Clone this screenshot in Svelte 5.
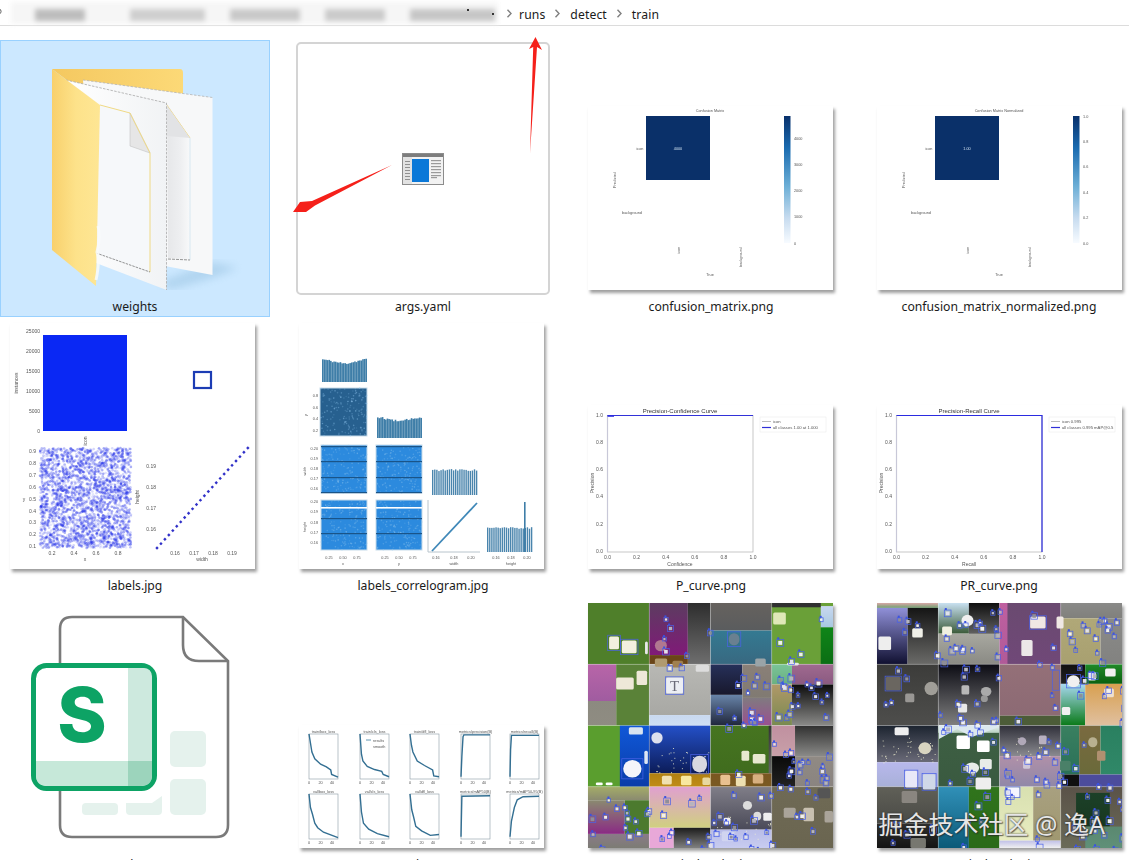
<script>
  function rng(seed) {
    let s = seed;
    return () => {
      s = (s + 0x6d2b79f5) | 0;
      let t = Math.imul(s ^ (s >>> 15), 1 | s);
      t = (t + Math.imul(t ^ (t >>> 7), 61 | t)) ^ t;
      return ((t ^ (t >>> 14)) >>> 0) / 4294967296;
    };
  }

  const files = [
    { name: 'weights', kind: 'folder', selected: true },
    { name: 'args.yaml', kind: 'yaml' },
    { name: 'confusion_matrix.png', kind: 'cm', title: 'Confusion Matrix', cell: '4000', ticks: ['0', '1000', '2000', '3000', '4000'] },
    { name: 'confusion_matrix_normalized.png', kind: 'cm', title: 'Confusion Matrix Normalized', cell: '1.00', ticks: ['0.0', '0.2', '0.4', '0.6', '0.8', '1.0'] },
    { name: 'labels.jpg', kind: 'labels' },
    { name: 'labels_correlogram.jpg', kind: 'correlogram' },
    { name: 'P_curve.png', kind: 'curve', title: 'Precision-Confidence Curve', xlabel: 'Confidence', l1: 'icon', l2: 'all classes 1.00 at 1.000', pr: false },
    { name: 'PR_curve.png', kind: 'curve', title: 'Precision-Recall Curve', xlabel: 'Recall', l1: 'icon 0.995', l2: 'all classes 0.995 mAP@0.5', pr: true },
    { name: 'results.csv', kind: 'sheet' },
    { name: 'results.png', kind: 'results' },
    { name: 'train_batch0.jpg', kind: 'mosaic', m: 0 },
    { name: 'train_batch1.jpg', kind: 'mosaic', m: 1, mark: true }
  ];

  const decimals = ['0.0', '0.2', '0.4', '0.6', '0.8', '1.0'];

  const r1 = rng(77);
  const labelDots = Array.from({ length: 2600 }, () => ({
    x: 30 + r1() * 91,
    y: 125 + r1() * 100,
    o: 0.1 + r1() * 0.3
  }));
  const diagDots = Array.from({ length: 24 }, (_, i) => ({ x: 147 + i * 3.95, y: 225 - i * 4.35 }));

  const corrPanels = [
    { x: 21, y: 65, w: 47, h: 48, fill: '#27608f', lines: [] },
    { x: 22, y: 122, w: 46, h: 48, fill: '#2c8ade', lines: [1, 16, 32, 47] },
    { x: 77, y: 122, w: 46, h: 48, fill: '#2c8ade', lines: [1, 16, 32, 47] },
    { x: 22, y: 177, w: 46, h: 50, fill: '#2c8ade', lines: [18, 33], gap: 7 },
    { x: 77, y: 177, w: 46, h: 50, fill: '#2c8ade', lines: [18, 33], gap: 7 }
  ];
  const r2 = rng(991);
  const corrDots = corrPanels.map((p) =>
    Array.from({ length: 170 }, () => ({ x: p.x + r2() * p.w, y: p.y + r2() * p.h, o: 0.15 + r2() * 0.35 }))
  );
  function hist(x, y, w, h, n, seed, edge = 0.1) {
    const r = rng(seed);
    const bw = w / n;
    return Array.from({ length: n }, (_, i) => {
      const c = Math.abs(i / (n - 1) - 0.5) * 2;
      const hh = h * (0.78 + edge * c + r() * 0.1);
      return { x: x + i * bw, y: y + h - hh, w: bw, h: hh };
    });
  }
  const hists = [
    ...hist(23, 37, 45, 22, 28, 11, 0.2),
    ...hist(78, 95, 45, 20, 28, 12, 0.22)
  ];
  const r3 = rng(33);
  const combs = [
    { x: 133, y: 146, w: 46, h: 26, n: 22 },
    { x: 188, y: 204, w: 46, h: 25, n: 22 }
  ].flatMap((c) =>
    Array.from({ length: c.n }, (_, i) => {
      const hh = c.h * (0.92 + r3() * 0.08);
      return { x: c.x + (i * c.w) / c.n, y: c.y + c.h - hh, w: c.w / c.n - 0.7, h: hh };
    })
  );

  const panels = [
    { t: 'train/box_loss', x: 10, y: 9, p: [[0,0],[.05,.2],[.1,.4],[.2,.55],[.4,.67],[.6,.73],[.75,.8],[.78,.9],[1,.96]] },
    { t: 'train/cls_loss', x: 61, y: 9, p: [[0,0],[.05,.45],[.1,.6],[.25,.72],[.5,.79],[.75,.83],[.8,.9],[1,.95]], legend: true },
    { t: 'train/dfl_loss', x: 111, y: 9, p: [[0,0],[.05,.25],[.1,.4],[.25,.6],[.5,.7],[.78,.8],[.82,.93],[1,.95]] },
    { t: 'metrics/precision(B)', x: 162, y: 9, p: [[0,.95],[.03,.5],[.07,.06],[.1,.02],[1,.02]] },
    { t: 'metrics/recall(B)', x: 211, y: 9, p: [[0,.95],[.02,.35],[.05,.03],[1,.03]] },
    { t: 'val/box_loss', x: 10, y: 69, p: [[0,0],[.05,.3],[.12,.45],[.2,.65],[.3,.75],[.5,.85],[1,.97]] },
    { t: 'val/cls_loss', x: 61, y: 69, p: [[0,0],[.05,.4],[.12,.65],[.3,.78],[.6,.88],[1,.95]] },
    { t: 'val/dfl_loss', x: 111, y: 69, p: [[0,0],[.06,.35],[.12,.5],[.2,.72],[.4,.82],[.7,.92],[1,.9]] },
    { t: 'metrics/mAP50(B)', x: 162, y: 69, p: [[0,.95],[.03,.05],[1,.04]] },
    { t: 'metrics/mAP50-95(B)', x: 211, y: 69, p: [[0,.95],[.05,.6],[.15,.3],[.25,.13],[.45,.06],[1,.05]] }
  ];
  const PW = 29;
  const PH = 45;
  const pathOf = (p) => p.map(([x, y]) => `${x * PW},${y * PH}`).join(' ');

  const T = 61.25;
  const area = (c, r, a, b, fx = 0, fy = 0, fw = 1, fh = 1) => ({
    x: (c + fx) * T, y: (r + fy) * T, w: fw * T, h: fh * T, a, b
  });
  const mosaicAreas = [
    [
      area(0,0,'#4f7f2a'),
      area(1,0,'#5c3c60','#801a78',0,0,.63,.85), area(1,0,'#2e2e2e','#6e6e6e',.63,0,.37,1), area(1,0,'#6a4518','#6a4518',0,.85,.63,.15),
      area(2,0,'#66625e','#5a5c5e',0,0,1,.45), area(2,0,'#347a92','#386880',0,.45,1,.55),
      area(3,0,'#6aa038'), area(3,0,'#c8d8f0','#a8c8e0',.8,.05,.2,.35), area(3,0,'#0f8518','#0b6e14',.8,.4,.2,.6), area(3,0,'#303030','#303030',0,0,.8,.07),
      area(0,1,'#b865a8','#a05ca0',0,0,.46,.6), area(0,1,'#5a8238','#5a8238',.46,0,.54,1), area(0,1,'#8c8a80','#8f8c82',0,.6,.46,.4),
      area(1,1,'#b8b8b4','#a8a8a4',0,0,1,.83), area(1,1,'#c8d8f0','#d0e0f4',0,.83,1,.17),
      area(2,1,'#26305a','#18182c',0,0,.52,.5), area(2,1,'#8a8078','#807a72',.52,0,.48,.55), area(2,1,'#6884a8','#20263c',0,.5,.52,.5), area(2,1,'#807a80','#9a5090',.52,.55,.48,.45),
      area(3,1,'#7ac498','#6ab080',0,0,.33,.33), area(3,1,'#a06a90','#8a5a80',.33,0,.67,.33), area(3,1,'#b09868','#788a50',0,.33,.33,.67), area(3,1,'#0c0c0c','#8a8a88',.33,.33,.67,.67),
      area(0,2,'#5a9e2e'), area(0,2,'#1058d8','#0a3ca8',.52,0,.48,1),
      area(1,2,'#2450c8','#0c1c58',0,0,1,.78), area(1,2,'#b08010','#c08c18',0,.78,1,.22),
      area(2,2,'#467520','#406c1e',0,0,1,.78), area(2,2,'#7a5620','#7a5a22',0,.78,1,.22), area(2,2,'#333','#666',.95,0,.05,.78),
      area(3,2,'#c090a0','#c8a0a8',0,0,.38,.5), area(3,2,'#303030','#8a8a88',.38,0,.62,.5), area(3,2,'#0a0a0a','#222',0,.5,.38,.5), area(3,2,'#908a84','#8a8480',.38,.5,.62,.5),
      area(0,3,'#a4ac68','#8a8a70',0,0,1,.22), area(0,3,'#8a8a70','#8a2a84',0,.22,.6,.55), area(0,3,'#8a7a88','#7c7c74',0,.77,1,.23), area(0,3,'#4c7a2e','#4c7a2e',.6,.22,.4,.55),
      area(1,3,'#e0a0d0','#d0d080',0,0,1,.67), area(1,3,'#e8a8d8','#e8a8d8',0,.67,.4,.33), area(1,3,'#1c1c1c','#808080',.4,.67,.6,.33),
      area(2,3,'#807e88','#4a4a58',0,0,1,.7), area(2,3,'#b8bce8','#c8ccf0',0,.7,1,.3),
      area(3,3,'#6f6a55','#6a6550')
    ],
    [
      area(0,0,'#d8a8a8','#70a070',0,0,1,.08), area(0,0,'#9090d8','#101030',0,.08,.5,.92), area(0,0,'#151515','#6a6a68',.5,.08,.5,.92),
      area(1,0,'#c8e0f0','#3a5a38',0,0,.5,.5), area(1,0,'#101010','#707070',.5,0,.5,.6), area(1,0,'#a8a8a0','#8a8a84',0,.5,1,.5),
      area(2,0,'#6a4a70','#704878'), area(2,0,'#c060a0','#b05a98',0,0,.13,1),
      area(3,0,'#8a8a88','#80807c',0,0,1,.25), area(3,0,'#b0a878','#a8a070',0,.25,.65,.75), area(3,0,'#8a8a88','#828280',.65,.25,.35,.75),
      area(0,1,'#3c3c3a','#4e4e4c'),
      area(1,1,'#0c0c14','#808080',0,0,1,1),
      area(2,1,'#947078','#8c6a74',0,0,1,.84), area(2,1,'#4c5c38','#4c5c38',0,.84,1,.16),
      area(3,1,'#101010','#202020',0,0,.4,.32), area(3,1,'#1f8a28','#0a6010',.4,0,.6,.32), area(3,1,'#a8d8f0','#0a7a18',0,.32,.4,.68), area(3,1,'#d8a050','#e0c0a0',.4,.32,.6,.68),
      area(0,2,'#1c2430','#6a6a78',0,0,1,.6), area(0,2,'#b8b8ec','#a8b0d8',0,.6,1,.4),
      area(1,2,'#3e6044','#3a5a40'), area(1,2,'#e8f0f4','#b8d0c0',0,0,1,.12),
      area(2,2,'#30303a','#8a8a90',0,0,1,.5), area(2,2,'#b090a8','#9088a8',0,.5,1,.5),
      area(3,2,'#3a8060','#2a7058',0,0,.3,.8), area(3,2,'#7a6a40','#6a6a3a',.3,0,.35,.8), area(3,2,'#2a8060','#308868',.65,0,.35,.8), area(3,2,'#101010','#101010',0,.8,.3,.2), area(3,2,'#4c4c9c','#4c4c9c',.3,.8,.7,.2),
      area(0,3,'#606058','#4a4a46',0,0,1,.6), area(0,3,'#30302e','#141414',0,.6,1,.4),
      area(1,3,'#3090b8','#0c5a78',0,0,.5,1), area(1,3,'#30741c','#2a6a18',.5,0,.5,1),
      area(2,3,'#d8e0b0','#e8ecc0',0,0,.55,.88), area(2,3,'#a8a080','#a09870',.55,0,.45,.88), area(2,3,'#c0c0e8','#f0f0f0',0,.88,1,.12),
      area(3,3,'#5a5248','#6a6a58',0,0,1,1), area(3,3,'#1c4028','#183820',.25,.1,.55,.55), area(3,3,'#5a8870','#609078',.4,.65,.6,.35)
    ]
  ];

  const Z = (zx, zy, zw, zh, c, round = false) => ({
    x: (zx / 696) * 245, y: (zy / 730) * 245, w: (zw / 696) * 245, h: (zh / 730) * 245, c, round
  });
  const icons = [
    [
      Z(60,100,28,38,'#f2f0de'), Z(96,112,42,38,'#f2f0de'), Z(162,115,8,38,'#e8e8e8'),
      Z(190,110,34,34,'#b07890',true), Z(190,165,35,25,'#b09a70'), Z(240,172,30,20,'#a08050'),
      Z(400,90,30,36,'#6a8090',true), Z(475,165,30,24,'#9aa4a8'), Z(526,28,36,36,'#dfe8b8'), Z(565,178,34,8,'#e8e8e8'),
      Z(80,222,50,36,'#eee8d8'), Z(138,202,30,42,'#eee8d8'),
      Z(222,222,48,48,'#eceef4'), Z(306,185,38,20,'#dddddd'),
      Z(100,468,52,52,'#f4f4fa',true), Z(116,370,40,22,'#d8e4f0'), Z(160,440,10,40,'#dde6f4'),
      Z(296,455,42,50,'#d8d8e0',true), Z(180,385,32,34,'#dde0ee',true), Z(210,515,28,26,'#f0e0b0'), Z(264,515,30,28,'#f8e8a0'), Z(325,520,22,22,'#e8d8a0'),
      Z(436,440,22,30,'#e8e8d0'), Z(468,450,36,28,'#e8e8d0'), Z(376,512,28,30,'#e8c090'), Z(420,515,28,30,'#eee0b0'), Z(468,510,30,28,'#d8b080'),
      Z(22,535,20,8,'#ffffff'), Z(50,535,20,8,'#ffffff'),
      Z(556,610,34,30,'#aaa49a'), Z(612,610,30,40,'#c8c0b0'), Z(652,552,36,30,'#555555'), Z(672,620,24,34,'#aaa49a'),
      Z(440,590,26,26,'#dddddd',true), Z(385,640,20,20,'#eeeeee'), Z(470,622,22,26,'#dddddd',true), Z(498,625,24,24,'#eeeeee'), Z(380,680,36,30,'#d0d4f0')
    ],
    [
      Z(4,100,36,40,'#eeeeee'), Z(100,75,30,28,'#f0f0e8'),
      Z(185,70,28,26,'#f0f0e0'), Z(240,35,34,34,'#f0f0f0',true), Z(435,40,44,36,'#f0e8e4'), Z(510,40,20,36,'#f0e8e4'), Z(410,110,32,48,'#ece8e8'),
      Z(25,220,42,40,'#6a6660'), Z(135,235,38,40,'#a09e98',true), Z(80,270,26,26,'#999794'),
      Z(230,300,26,26,'#e8e8e8'), Z(240,245,22,28,'#b8b8b8'), Z(295,250,30,28,'#aaaaaa',true), Z(295,275,20,20,'#999999',true),
      Z(540,215,36,36,'#f0f0f0',true), Z(600,205,22,26,'#f0f0f0'), Z(648,195,30,24,'#f0f0f0'), Z(645,255,28,26,'#eee0d0'), Z(525,310,24,24,'#f0f0f0'),
      Z(50,370,40,24,'#eeeeee'), Z(118,415,36,36,'#d8d4c0',true), Z(80,500,34,50,'#e8e8f8'), Z(130,510,36,46,'#d0d8e8'),
      Z(226,395,38,40,'#ffffff'), Z(284,410,36,34,'#ffffff'), Z(250,475,40,34,'#e8ece8',true), Z(292,465,34,30,'#e8ece8'), Z(280,520,44,36,'#eeeeee'),
      Z(400,400,24,24,'#b0a8b8',true), Z(460,395,22,26,'#b8b0c0'), Z(415,470,20,24,'#d0c8d8'),
      Z(600,400,26,30,'#b8b090',true), Z(625,440,24,30,'#b09070'), Z(520,470,30,30,'#4a8068'),
      Z(70,560,44,36,'#8a8680'), Z(95,700,44,30,'#777770'), Z(368,550,36,28,'#f4f4ff')
    ]
  ];

  const clusters = [
    [
      [180,20,160,170,8],[520,30,160,150,4],[360,200,140,160,16],[530,200,160,160,18],
      [360,380,180,170,5],[530,380,170,180,20],[0,550,190,170,16],[190,550,170,180,14],[360,550,170,170,12],[540,590,160,60,3]
    ],
    [
      [0,40,170,150,6],[180,10,170,180,20],[350,20,170,160,5],[530,10,170,170,16],[170,200,170,170,14],[0,200,120,90,3],
      [350,250,190,100,3],[530,190,170,180,9],[350,380,180,180,22],[530,380,170,180,7],[170,380,170,180,7],
      [530,560,170,170,20],[0,560,170,170,4],[170,560,170,170,5],[350,560,170,170,3]
    ]
  ];
  const rm = rng(4242);
  const boxes = clusters.map((list) =>
    list.flatMap(([x, y, w, h, n]) =>
      Array.from({ length: n }, () => {
        const bw = 10 + rm() * 10;
        const s = 245 / 696;
        return {
          x: (x + rm() * w) * s,
          y: (y + rm() * h) * s,
          s: bw * s,
          fill: ['#e0e0ec', '#b4b4c0', '#f0f0f0', '#8e8e9a'][Math.floor(rm() * 4)]
        };
      })
    )
  );
  const framed = [
    [Z(56,96,36,46,''), Z(92,108,50,46,''), Z(220,220,52,52,''), Z(396,86,38,44,''), Z(96,464,60,60,''), Z(292,451,50,58,'')],
    [Z(78,498,38,54,''), Z(128,508,40,50,''), Z(433,38,48,40,''), Z(23,218,46,44,''), Z(538,213,40,40,''), Z(366,548,40,32,''), Z(498,200,20,60,'')]
  ];

  const buildings = [
    [
      [66, 150, 9, 21], [78, 138, 10, 33], [91, 146, 9, 25], [103, 152, 8, 19], [113, 142, 9, 29],
      [127, 222, 8, 16], [139, 212, 9, 26], [152, 218, 8, 20], [164, 208, 9, 30], [176, 216, 8, 22]
    ],
    [
      [3, 134, 8, 29], [15, 139, 9, 24], [28, 130, 7, 33], [39, 142, 9, 21], [51, 137, 8, 26],
      [126, 142, 7, 16], [137, 134, 8, 24], [149, 146, 7, 12], [160, 138, 8, 20], [171, 145, 7, 13]
    ]
  ];
  const rw = rng(5150);
  const lights = buildings.map((list) =>
    list.flatMap(([x, y, w, h]) =>
      Array.from({ length: Math.floor(h / 3.5) }, () => ({
        x: x + 1 + rw() * (w - 2),
        y: y + 1 + rw() * (h - 2)
      }))
    )
  );
</script>

<div class="explorer">
  <header class="pathbar">
    <div class="crumb-mark">P</div>
    <div class="haze">
      <span class="smear s1"></span>
      <span class="smear s2"></span>
      <span class="smear s3"></span>
      <span class="smear s4"></span>
      <span class="smear s5"></span>
    </div>
    <i class="speck a"></i><i class="speck b"></i>
    <span class="chev first"><svg width="7" height="9" viewBox="0 0 7 9"><path d="M1.500 .8 5 4.500 1.500 8.200" fill="none" stroke="#808080" stroke-width="1.400" /></svg></span>
    <span class="crumb">runs</span>
    <span class="chev"><svg width="7" height="9" viewBox="0 0 7 9"><path d="M1.500 .8 5 4.500 1.500 8.200" fill="none" stroke="#808080" stroke-width="1.400" /></svg></span>
    <span class="crumb">detect</span>
    <span class="chev"><svg width="7" height="9" viewBox="0 0 7 9"><path d="M1.500 .8 5 4.500 1.500 8.200" fill="none" stroke="#808080" stroke-width="1.400" /></svg></span>
    <span class="crumb">train</span>
  </header>

  <main class="grid">
    {#each files as f, idx}
      <div class={`tile col${idx % 4}`} class:selected={f.selected}>
        <div class="slot">
          {#if f.kind === 'folder'}
            <svg class="art" viewBox="0 40 270 250" width="270" height="250">
              <defs>
                <linearGradient id="flap" x1="0" y1="0" x2="1" y2="0">
                  <stop offset="0" stop-color="#f4c860" /><stop offset="1" stop-color="#fcd977" />
                </linearGradient>
                <linearGradient id="front" x1="0" y1="0" x2="1" y2="0">
                  <stop offset="0" stop-color="#f8d06c" /><stop offset=".5" stop-color="#fde28a" /><stop offset="1" stop-color="#fee694" />
                </linearGradient>
                <linearGradient id="page" x1="0" y1="0" x2="1" y2="0">
                  <stop offset="0" stop-color="#ffffff" /><stop offset="1" stop-color="#f1f3f5" />
                </linearGradient>
                <linearGradient id="under" x1="0" y1="0" x2="1" y2="0">
                  <stop offset="0" stop-color="#e6e7e9" /><stop offset=".6" stop-color="#eeeff1" /><stop offset="1" stop-color="#f8f9fa" />
                </linearGradient>
                <filter id="shadowblur"><feGaussianBlur stdDeviation="4" /></filter>
              </defs>
              <path d="M212 262 L238 268 L212 278 L170 290 L160 282 Z" fill="#8fbcdc" opacity=".45" filter="url(#shadowblur)" />
              <path d="M52 69 H180 Q183 69 183 73 V94 L100 105 Z" fill="url(#flap)" />
              <path d="M83 80 L212.5 97.5 V275 L96 253 Z" fill="#f7f8f9" />
              <path d="M83 80 L212.5 97.5" stroke="#b4b4b4" stroke-width=".8" stroke-dasharray="2.5 1.5" fill="none" />
              <path d="M167 104 L190 138 V259 L168 258 Z" fill="url(#under)" />
              <path d="M166 104 L190 138" stroke="#f3d778" stroke-width="1" fill="none" />
              <path d="M167 136 L190 138 L166 104 Z" fill="#e2e3e5" />
              <path d="M190 138 V260" stroke="#cfe3f0" stroke-width=".8" />
              <path d="M168 259 L190 260" stroke="#6a6a6a" stroke-width=".7" stroke-dasharray="3 1" />
              <path d="M66 80 L166.5 103 V290 L96 263 Z" fill="url(#page)" />
              <path d="M66 80 L166.5 103 V290" stroke="#aaa" stroke-width=".8" stroke-dasharray="2.5 1.3" fill="none" />
              <path d="M100 105 L130 113 L150 153 V272 L96 253 Z" fill="#f6f8fa" />
              <path d="M130 113 V146 L150 153 Z" fill="#e6e6e6" stroke="#bbb" stroke-width=".5" />
              <path d="M100 105 L130 113 L150 153 V272" stroke="#f0da86" stroke-width="1" fill="none" />
              <path d="M96 253 L150 272" stroke="#666" stroke-width=".7" stroke-dasharray="2.5 1" />
              <path d="M52 69 L100 105 L96 286 L52 250 Z" fill="url(#front)" />
              <path d="M98 226 Q101 238 97 252 Q100 262 96 280" stroke="#f8fafb" stroke-width="3" fill="none" opacity=".85" />
            </svg>
          {:else if f.kind === 'yaml'}
            <div class="yaml-card">
              <svg class="yaml" width="42" height="32" viewBox="0 0 42 32">
                <rect x=".5" y=".5" width="41" height="31" fill="#f2f2f2" stroke="#8c8c8c" />
                <rect x="1" y="1" width="40" height="3" fill="#7d7d7d" />
                <rect x="1" y="4" width="9" height="27" fill="#e2e2e2" />
                <rect x="10" y="6" width="17" height="23" fill="#0a78d8" />
                {#each [8, 11, 14, 17, 20, 23, 26] as y}
                  <rect x="3" {y} width="5" height="1" fill="#909090" />
                {/each}
                {#each [7, 10, 13, 16, 19, 22, 24] as y, i}
                  <rect x="29" {y} width={i === 6 ? 6 : 10} height="1.2" fill="#9a9a9a" />
                {/each}
              </svg>
            </div>
          {:else if f.kind === 'cm'}
            <svg class="thumb soft" width="245" height="184" viewBox="0 0 245 184">
              <defs>
                <linearGradient id="blues" x1="0" y1="0" x2="0" y2="1">
                  <stop offset="0" stop-color="#08306b" /><stop offset=".25" stop-color="#1a6bb0" />
                  <stop offset=".55" stop-color="#6baed6" /><stop offset=".8" stop-color="#c6dbef" /><stop offset="1" stop-color="#f7fbff" />
                </linearGradient>
              </defs>
              <rect width="245" height="184" fill="#fff" />
              <text class="tiny" x="122" y="5.500" text-anchor="middle">{f.title}</text>
              <rect x="58" y="10" width="64" height="64" fill="#0a3069" />
              <text class="tiny cellnum" x="90" y="44" text-anchor="middle">{f.cell}</text>
              <rect x="196" y="10" width="6.500" height="127" fill="url(#blues)" />
              <text class="tiny" x="52" y="44" text-anchor="middle">icon</text>
              <text class="tiny" x="44" y="107.500" text-anchor="middle">background</text>
              <text class="tiny" transform="translate(28 74) rotate(-90)" text-anchor="middle">Predicted</text>
              <text class="tiny" transform="translate(92 144) rotate(-90)" text-anchor="middle">icon</text>
              <text class="tiny" transform="translate(154 151) rotate(-90)" text-anchor="middle">background</text>
              <text class="tiny" x="122" y="170" text-anchor="middle">True</text>
              {#each f.ticks as t, i}
                {@const ty = 137 - i * (127 / (f.ticks.length - 1) * (f.ticks.length === 5 ? 0.82 : 1))}
                <text class="tiny" x="206" y={ty + 1.500}>{t}</text>
              {/each}
            </svg>
          {:else if f.kind === 'labels'}
            <svg class="thumb soft" width="245" height="246" viewBox="0 0 245 246">
              <rect width="245" height="246" fill="#fff" />
              <rect x="33" y="12" width="84" height="96" fill="#0a28f4" />
              {#each ['25000', '20000', '15000', '10000', '5000', '0'] as t, i}
                <text class="tick" x="30" y={10 + i * 20} text-anchor="end">{t}</text>
              {/each}
              <text class="tick" transform="translate(8 60) rotate(-90)" text-anchor="middle">instances</text>
              <text class="tick" transform="translate(77 118) rotate(-90)" text-anchor="middle">icon</text>
              <rect x="184" y="49" width="17" height="16" fill="none" stroke="#1c3cb4" stroke-width="2.200" />
              {#each labelDots as d}
                <circle cx={d.x} cy={d.y} r="1.300" fill="#1a28e8" opacity={d.o} />
              {/each}
              {#each ['0.9', '0.8', '0.7', '0.6', '0.5', '0.4', '0.3', '0.2', '0.1'] as t, i}
                <text class="tick" x="26" y={130 + i * 11.900} text-anchor="end">{t}</text>
              {/each}
              {#each ['0.2', '0.4', '0.6', '0.8'] as t, i}
                <text class="tick" x={42 + i * 22} y="232" text-anchor="middle">{t}</text>
              {/each}
              <text class="tick" x="75" y="238" text-anchor="middle">x</text>
              <text class="tick" x="14" y="178" text-anchor="middle">y</text>
              {#each diagDots as d}
                <rect x={d.x - 1.200} y={d.y - 1.200} width="2.400" height="2.400" fill="#3030c8" transform={`rotate(45 ${d.x} ${d.y})`} />
              {/each}
              {#each ['0.19', '0.18', '0.17', '0.16'] as t, i}
                <text class="tick" x="146" y={145 + i * 21} text-anchor="end">{t}</text>
              {/each}
              {#each ['0.16', '0.17', '0.18', '0.19'] as t, i}
                <text class="tick" x={165 + i * 19} y="232" text-anchor="middle">{t}</text>
              {/each}
              <text class="tick" x="192" y="238" text-anchor="middle">width</text>
              <text class="tick" transform="translate(129 174) rotate(-90)" text-anchor="middle">height</text>
            </svg>
          {:else if f.kind === 'correlogram'}
            <svg class="thumb soft" width="245" height="246" viewBox="0 0 245 246">
              <rect width="245" height="246" fill="#fff" />
              {#each hists as b}
                <rect x={b.x} y={b.y} width={b.w} height={b.h} fill="#3f7ea8" />
              {/each}
              {#each combs as b}
                <rect x={b.x} y={b.y} width={b.w} height={b.h} fill="#4a85ad" />
              {/each}
              {#each corrPanels as p, i}
                <rect x={p.x} y={p.y} width={p.w} height={p.h} fill={p.fill} stroke="#c8dcea" stroke-width="1" />
                {#each corrDots[i] as d}
                  <circle cx={d.x} cy={d.y} r=".8" fill="#8ec4ee" opacity={d.o} />
                {/each}
                {#each p.lines as l}
                  <rect x={p.x} y={p.y + l} width={p.w} height="1.200" fill="#1a5488" />
                {/each}
                {#if p.gap}
                  <rect x={p.x} y={p.y + p.gap} width={p.w} height="1.600" fill="#fff" />
                {/if}
              {/each}
              <path d="M129 177 V229 H181" fill="none" stroke="#b8c4cc" stroke-width="1" />
              <path d="M133 228 L178 180" stroke="#3f88b8" stroke-width="1.800" />
              <rect x="225" y="179" width="1.600" height="50" fill="#3f7ea8" />
              {#each [['0.8', 74], ['0.6', 86], ['0.4', 97], ['0.2', 109]] as [t, y]}
                <text class="tick sm" x="19" {y} text-anchor="end">{t}</text>
              {/each}
              {#each [['0.20', 127], ['0.19', 137], ['0.18', 147], ['0.17', 157], ['0.16', 167]] as [t, y]}
                <text class="tick sm" x="19" {y} text-anchor="end">{t}</text>
              {/each}
              {#each [['0.20', 180], ['0.19', 190], ['0.18', 201], ['0.17', 211], ['0.16', 221]] as [t, y]}
                <text class="tick sm" x="19" {y} text-anchor="end">{t}</text>
              {/each}
              {#each [[30, '0.25'], [44, '0.50'], [58, '0.75'], [86, '0.25'], [100, '0.50'], [114, '0.75'], [137, '0.16'], [155, '0.18'], [172, '0.20'], [197, '0.16'], [212, '0.18'], [228, '0.20']] as [x, t]}
                <text class="tick sm" {x} y="236" text-anchor="middle">{t}</text>
              {/each}
              {#each [[44, 'x'], [100, 'y'], [155, 'width'], [212, 'height']] as [x, t]}
                <text class="tick sm" {x} y="242" text-anchor="middle">{t}</text>
              {/each}
              <text class="tick sm" transform="translate(7 148) rotate(-90)" text-anchor="middle">width</text>
              <text class="tick sm" transform="translate(7 204) rotate(-90)" text-anchor="middle">height</text>
              <text class="tick sm" transform="translate(8 92) rotate(-90)" text-anchor="middle">y</text>
            </svg>
          {:else if f.kind === 'curve'}
            <svg class="thumb soft" width="245" height="164" viewBox="0 0 245 164">
              <rect width="245" height="164" fill="#fff" />
              <text class="tick big" x="92" y="8" text-anchor="middle">{f.title}</text>
              <rect x="19.500" y="10.500" width="145.500" height="136.500" fill="none" stroke="#b0b0b0" stroke-width=".7" />
              <path d="M19.500 147 V10.500" stroke="#c8c8d8" stroke-width="1.200" />
              {#if f.pr}
                <path d="M19.500 10.500 H165 V147" fill="none" stroke="#2b2be0" stroke-width="1.200" />
              {:else}
                <path d="M19.500 10.500 H165" fill="none" stroke="#3232d8" stroke-width="1" />
                <path d="M19.500 11 H26" stroke="#2b2be0" stroke-width="1.600" />
              {/if}
              {#each decimals as t, i}
                <text class="tick" x="15" y={148 - i * 27.300} text-anchor="end">{t}</text>
                <text class="tick" x={19.500 + i * 29.100} y="154" text-anchor="middle">{t}</text>
              {/each}
              <text class="tick" transform="translate(6 78) rotate(-90)" text-anchor="middle">Precision</text>
              <text class="tick" x="92" y="161" text-anchor="middle">{f.xlabel}</text>
              <rect x="172" y="12" width="66" height="15" fill="#fff" stroke="#e8e8e8" stroke-width=".5" />
              <path d="M174 16.500 H183" stroke="#909090" stroke-width=".6" />
              <path d="M174 22.500 H183" stroke="#3030d8" stroke-width="1.200" />
              <text class="tick leg" x="185" y="18">{f.l1}</text>
              <text class="tick leg" x="185" y="24">{f.l2}</text>
            </svg>
          {:else if f.kind === 'sheet'}
            <svg class="art" viewBox="0 598 270 250" width="270" height="250">
              <path d="M72 617 H183 L228 661 V825 Q228 837 216 837 H72 Q60 837 60 825 V629 Q60 617 72 617 Z" fill="#fff" stroke="#7a7a7a" stroke-width="2.600" />
              <path d="M183 617 V645 Q183 661 199 661 H228" fill="none" stroke="#7a7a7a" stroke-width="2.600" />
              <rect x="170" y="731" width="36" height="36" rx="5" fill="#e5f2ed" />
              <rect x="170" y="779" width="36" height="36" rx="5" fill="#e5f2ed" />
              <rect x="82" y="803" width="36" height="12" rx="4" fill="#e5f2ed" />
              <path d="M126 803 H152 L162 796 V811 Q162 815 158 815 H130 Q126 815 126 811 Z" fill="#e5f2ed" />
              <rect x="33.500" y="665.500" width="121" height="123" rx="13" fill="#fff" stroke="#0da365" stroke-width="5" />
              <path d="M128 668 H143 Q152 668 152 677 V761 H128 Z" fill="#cde9de" />
              <path d="M36 761 H128 V786 H47 Q36 786 36 775 Z" fill="#c6e8d9" />
              <path d="M128 761 H152 V775 Q152 786 141 786 H128 Z" fill="#9cd4bc" />
              <text class="sheet-s" x="82" y="741.500" text-anchor="middle">S</text>
            </svg>
          {:else if f.kind === 'results'}
            <svg class="thumb softer" width="245" height="123" viewBox="0 0 245 123">
              <rect width="245" height="123" fill="#fff" />
              {#each panels as p}
                <g transform={`translate(${p.x} ${p.y})`}>
                  <text class="tick sm" x={PW / 2} y="-1.500" text-anchor="middle">{p.t}</text>
                  <rect width={PW} height={PH} fill="#fff" stroke="#8a9aa4" stroke-width=".6" />
                  <polyline points={pathOf(p.p)} fill="none" stroke="#336f92" stroke-width="1.400" />
                  {#if p.legend}
                    <path d="M6 6 H11" stroke="#3a7ca0" stroke-width=".8" />
                    <text class="tick sm" x="13" y="8">results</text>
                    <text class="tick sm" x="13" y="14">smooth</text>
                  {/if}
                  {#each [0, 20, 40] as t, i}
                    <text class="tick sm" x={i * 11.500} y={PH + 4.500} text-anchor="middle">{t}</text>
                  {/each}
                </g>
              {/each}
            </svg>
          {:else if f.kind === 'mosaic'}
            <div class="mosaic-wrap">
              <svg class="thumb softer" width="245" height="245" viewBox="0 0 245 245">
                <defs>
                  {#each mosaicAreas[f.m] as a, i}
                    <linearGradient id={`g${f.m}-${i}`} x1="0" y1="0" x2="0" y2="1">
                      <stop offset="0" stop-color={a.a} /><stop offset="1" stop-color={a.b || a.a} />
                    </linearGradient>
                  {/each}
                </defs>
                {#each mosaicAreas[f.m] as a, i}
                  <rect x={a.x} y={a.y} width={a.w} height={a.h} fill={`url(#g${f.m}-${i})`} />
                {/each}
                {#each buildings[f.m] as [x, y, w, h]}
                  <rect {x} {y} {w} {h} fill="#0a0a10" />
                {/each}
                {#each lights[f.m] as l}
                  <rect x={l.x} y={l.y} width=".9" height=".9" fill="#f0f0d0" />
                {/each}
                {#if f.m === 1}
                  <path d="M62 136 L80 126 L95 134 L122 124 V122 H62 Z" fill="#dce8ee" />
                {/if}
                {#each [1, 2, 3] as k}
                  <rect x={k * T - 0.4} y="0" width=".8" height="245" fill="#fff" opacity=".3" />
                  <rect x="0" y={k * T - 0.4} width="245" height=".8" fill="#fff" opacity=".3" />
                {/each}
                {#each icons[f.m] as ic}
                  <rect x={ic.x} y={ic.y} width={ic.w} height={ic.h} rx={ic.round ? ic.w / 2 : 1.500} fill={ic.c} />
                {/each}
                {#each framed[f.m] as b}
                  <rect x={b.x} y={b.y} width={b.w} height={b.h} fill="none" stroke="#4a62e8" stroke-width=".7" />
                {/each}
                {#each boxes[f.m] as b}
                  <rect x={b.x} y={b.y} width={b.s} height={b.s} fill="none" stroke="#4a62e8" stroke-width=".7" />
                  <rect x={b.x + b.s * 0.22} y={b.y + b.s * 0.22} width={b.s * 0.56} height={b.s * 0.56} fill={b.fill} />
                  <rect x={b.x + 0.5} y={b.y - 2} width="2" height="2" fill="#3a52e0" />
                {/each}
                {#if f.m === 0}
                  <text class="t-icon" x="86.500" y="88" text-anchor="middle">T</text>
                {/if}
              </svg>
              {#if f.mark}
                <div class="watermark">掘金技术社区 @ 逸A</div>
              {/if}
            </div>
          {/if}
        </div>
        <div class="label">{f.name}</div>
      </div>
    {/each}
  </main>

  <svg class="arrows" width="1129" height="260" viewBox="0 0 1129 260" aria-hidden="true">
    <path d="M530 153 L533.200 47 L529 49 L535.500 37 L542 50 L537 47 Z" fill="#f5201a" />
    <path d="M392 165 L312 201 L300 202 L293 212 L306 212 L315 205.500 Z" fill="#f5201a" />
  </svg>
</div>

<style>
  :global(body) {
    margin: 0;
    background: #fff;
  }
  .explorer {
    position: relative;
    width: 1129px;
    height: 860px;
    overflow: hidden;
    background: #fff;
    font-family: "Noto Sans", "Open Sans", sans-serif;
    color: #1a1a1a;
  }
  .pathbar {
    height: 25px;
    border-bottom: 1px solid #dcdcdc;
    display: flex;
    align-items: center;
    font-size: 12.200px;
    position: relative;
  }
  .crumb-mark {
    width: 12px;
    font-size: 8px;
    line-height: 8px;
    color: #444;
    filter: blur(.5px);
    margin-left: -3px;
    flex: none;
  }
  .haze {
    width: 487px;
    height: 22px;
    margin-left: 2px;
    display: flex;
    align-items: center;
    flex: none;
    background: #f6f6f6;
    filter: blur(2.500px);
    padding-top: 4px;
    box-sizing: border-box;
  }
  .smear {
    height: 12px;
    display: block;
    flex: none;
  }
  .s1 { width: 50px; margin-left: 24px; background: #bdbdbd; }
  .s2 { width: 75px; margin-left: 45px; background: #cfcfcf; }
  .s3 { width: 70px; margin-left: 25px; background: #c9c9c9; }
  .s4 { width: 60px; margin-left: 25px; background: #cbcbcb; }
  .s5 { width: 85px; margin-left: 25px; background: #c6c6c6; }
  .speck {
    position: absolute;
    width: 2px;
    height: 2px;
    background: #333;
  }
  .speck.a { left: 467px; top: 9px; }
  .speck.b { left: 492px; top: 13px; }
  .chev {
    width: 7px;
    height: 9px;
    display: flex;
    flex: none;
    margin: 2px 9px 0;
  }
  .chev.first {
    margin-left: 8px;
    margin-right: 6px;
  }
  .crumb {
    flex: none;
    padding-top: 3px;
    letter-spacing: .1px;
  }
  .grid {
    display: grid;
    grid-template-columns: repeat(4, 270px);
    grid-auto-rows: 277px;
    column-gap: 18px;
    row-gap: 2px;
    padding-top: 14px;
  }
  .tile {
    display: flex;
    flex-direction: column;
    align-items: center;
    box-sizing: border-box;
    min-width: 0;
  }
  .tile.selected {
    background: #cce8ff;
    outline: 1px solid #99d1ff;
    outline-offset: -1px;
  }
  .slot {
    width: 270px;
    height: 250px;
    flex: none;
    display: flex;
    align-items: flex-end;
    justify-content: center;
  }
  .col0 .thumb { margin-right: 5px; }
  .col1 .thumb { margin-right: 3px; }
  .col2 .thumb, .col2 .mosaic-wrap { margin-right: 1px; }
  .col2 .mosaic-wrap .thumb { margin-right: 0; }
  .art {
    display: block;
    flex: none;
  }
  .thumb {
    display: block;
    flex: none;
    box-shadow: 2px 3px 3px rgba(0, 0, 0, .38);
  }
  .soft {
    filter: blur(.35px);
  }
  .softer {
    filter: blur(.6px);
  }
  .yaml-card {
    width: 250px;
    height: 249px;
    margin-bottom: -5px;
    border: 2px solid #d4d4d4;
    border-radius: 5px;
    display: flex;
    align-items: center;
    justify-content: center;
    background: #fff;
    flex: none;
  }
  .yaml {
    display: block;
  }
  .label {
    height: 27px;
    line-height: 33px;
    font-size: 12.200px;
    text-align: center;
    white-space: nowrap;
    flex: none;
  }
  .tiny {
    font-family: "Liberation Sans", sans-serif;
    font-size: 3.800px;
    fill: #555;
  }
  .cellnum {
    fill: #cfe0ef;
  }
  .tick {
    font-family: "Liberation Sans", sans-serif;
    font-size: 5px;
    fill: #555;
  }
  .tick.sm {
    font-size: 3.800px;
  }
  .tick.leg {
    font-size: 4.200px;
  }
  .tick.big {
    font-size: 6px;
    fill: #333;
  }
  .sheet-s {
    font-family: "Inter", "Liberation Sans", sans-serif;
    font-weight: 800;
    font-size: 75px;
    fill: #0da365;
  }
  .t-icon {
    font-family: "Liberation Serif", serif;
    font-size: 15px;
    fill: #6a6a78;
  }
  .mosaic-wrap {
    position: relative;
    flex: none;
  }
  .watermark {
    position: absolute;
    left: 2px;
    top: 203px;
    white-space: nowrap;
    font-family: "Noto Sans", "Noto Sans CJK SC", sans-serif;
    font-size: 25px;
    line-height: 36px;
    color: #e6e6e6;
    text-shadow: 0 0 2px rgba(40, 40, 40, .9), 1px 1px 1px rgba(40, 40, 40, .6);
  }
  .arrows {
    position: absolute;
    left: 0;
    top: 0;
    pointer-events: none;
  }
</style>
